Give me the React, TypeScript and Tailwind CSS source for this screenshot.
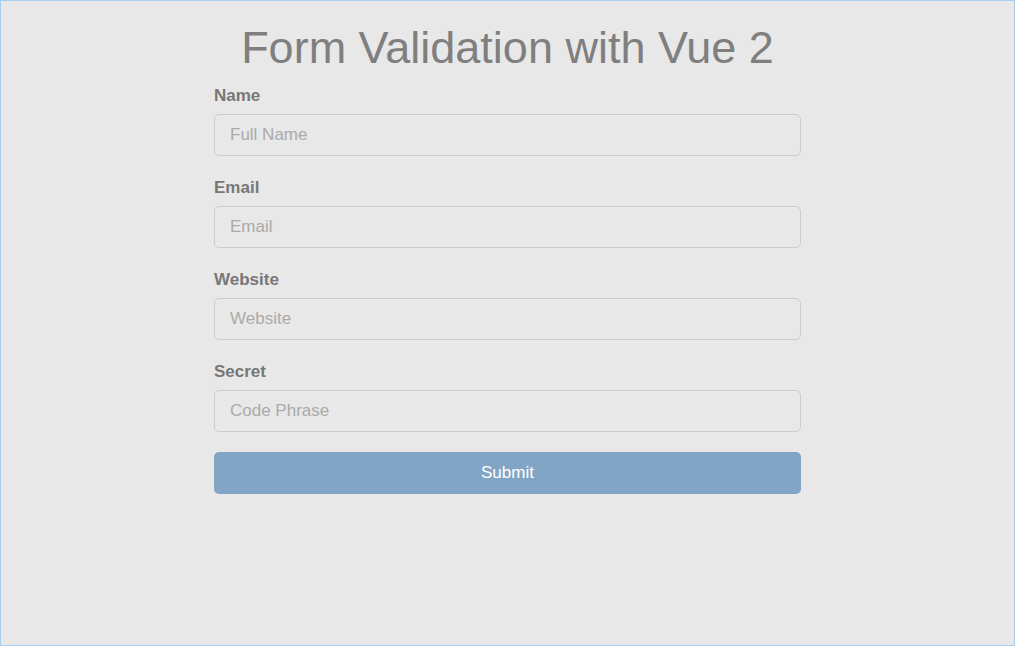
export default function App() {
  const fields = [
    { label: 'Name', placeholder: 'Full Name', type: 'text' },
    { label: 'Email', placeholder: 'Email', type: 'email' },
    { label: 'Website', placeholder: 'Website', type: 'url' },
    { label: 'Secret', placeholder: 'Code Phrase', type: 'text' },
  ];

  return (
    <div className="h-screen w-full overflow-hidden border border-[#a9cdef] bg-[#e8e8e8] font-['Liberation_Sans',Arial,sans-serif]">
      <div className="mx-auto w-[587px]">
        <h1 className="mt-[23px] mb-[12px] text-center text-[45px] leading-[48px] font-normal text-[#7f7f7f]">
          Form Validation with Vue 2
        </h1>
        <form onSubmit={(e) => e.preventDefault()}>
          {fields.map((f) => (
            <div key={f.label} className="mb-[20px]">
              <label className="mb-[6px] block text-[17px] leading-[24px] font-bold text-[#777777]">
                {f.label}
              </label>
              <input
                type={f.type}
                placeholder={f.placeholder}
                className="block h-[42px] w-full rounded-[5px] border border-[#cccccc] bg-[#e8e8e8] px-[15px] text-[17px] text-[#555555] outline-none placeholder:text-[#aaaaaa]"
              />
            </div>
          ))}
          <button
            type="submit"
            className="block h-[42px] w-full rounded-[5px] bg-[#82a5c5] text-[17px] text-white"
          >
            Submit
          </button>
        </form>
      </div>
    </div>
  );
}
